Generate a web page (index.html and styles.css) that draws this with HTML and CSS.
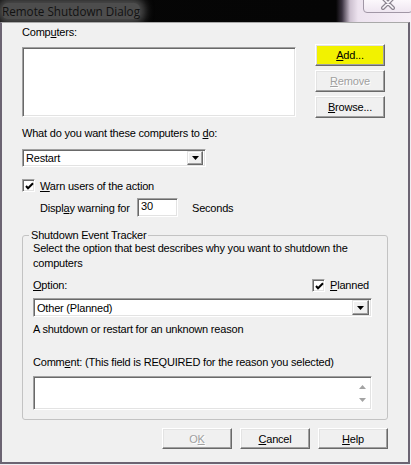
FILE: index.html
```html
<!DOCTYPE html>
<html>
<head>
    <meta charset="UTF-8">
    <title>Remote Shutdown Dialog</title>
    <link rel="stylesheet" href="styles.css">
</head>
<body>
    <div class="window">
        <div class="titlebar">
            <span class="title">Remote Shutdown Dialog</span>
            <div class="close-btn">
                <svg width="14" height="12" viewBox="0 0 14 12">
                    <path d="M2 -1 L12 9 M12 -1 L2 9" stroke="#8c8590" stroke-width="4" stroke-linecap="round"/>
                    <path d="M2 -1 L12 9 M12 -1 L2 9" stroke="#fbf8fc" stroke-width="1.6" stroke-linecap="round"/>
                </svg>
            </div>
        </div>
        <div class="dialog">
            <div class="computers">
                <div class="computers-left">
                    <div class="label">Comp<u>u</u>ters:</div>
                    <div class="listbox"></div>
                </div>
                <div class="side-buttons">
                    <button class="btn btn-add"><u>A</u>dd...</button>
                    <button class="btn" disabled><u>R</u>emove</button>
                    <button class="btn"><u>B</u>rowse...</button>
                </div>
            </div>

            <div class="label what">What do you want these computers to <u>d</u>o:</div>
            <div class="combo combo-action">
                <span class="combo-text">Restart</span>
                <span class="drop">
                    <svg width="7" height="4" viewBox="0 0 7 4"><path d="M0 0 H7 L3.5 4 Z" fill="#000"/></svg>
                </span>
            </div>

            <div class="check-row warn-check">
                <span class="checkbox">
                    <svg width="9" height="9" viewBox="0 0 9 9"><path d="M1 4 L3 6.2 L8 1.2" stroke="#000" stroke-width="2" fill="none"/></svg>
                </span>
                <span><u>W</u>arn users of the action</span>
            </div>

            <div class="warn-row">
                <span class="warn-label">Displ<u>a</u>y warning for</span>
                <div class="edit">30</div>
                <span class="seconds">Seconds</span>
            </div>

            <fieldset class="tracker">
                <legend>Shutdown Event Tracker</legend>
                <p class="hint">Select the option that best describes why you want to shutdown the computers</p>
                <div class="option-row">
                    <span><u>O</u>ption:</span>
                    <div class="check-row planned">
                        <span class="checkbox">
                            <svg width="9" height="9" viewBox="0 0 9 9"><path d="M1 4 L3 6.2 L8 1.2" stroke="#000" stroke-width="2" fill="none"/></svg>
                        </span>
                        <span><u>P</u>lanned</span>
                    </div>
                </div>
                <div class="combo combo-option">
                    <span class="combo-text">Other (Planned)</span>
                    <span class="drop">
                        <svg width="7" height="4" viewBox="0 0 7 4"><path d="M0 0 H7 L3.5 4 Z" fill="#000"/></svg>
                    </span>
                </div>
                <div class="label reason">A shutdown or restart for an unknown reason</div>
                <div class="label comment-label">Comm<u>e</u>nt: (This field is REQUIRED for the reason you selected)</div>
                <div class="memo">
                    <div class="memo-scroll">
                        <svg width="7" height="4" viewBox="0 0 7 4"><path d="M0 4 H7 L3.5 0 Z" fill="#a3a3a3"/></svg>
                        <svg width="7" height="4" viewBox="0 0 7 4"><path d="M0 0 H7 L3.5 4 Z" fill="#a3a3a3"/></svg>
                    </div>
                </div>
            </fieldset>

            <div class="footer">
                <button class="btn" disabled>O<u>K</u></button>
                <button class="btn"><u>C</u>ancel</button>
                <button class="btn"><u>H</u>elp</button>
            </div>
        </div>
    </div>
</body>
</html>
```

FILE: styles.css
```css
* {
    box-sizing: border-box;
}

body {
    margin: 0;
    background-color: #f1eef2;
    font-family: "Liberation Sans", Arial, sans-serif;
    font-size: 11px;
    letter-spacing: -0.2px;
    color: #000;
}

.window {
    width: 411px;
    height: 465px;
    display: flex;
    flex-direction: column;
}

/* glass title bar */
.titlebar {
    position: relative;
    height: 22px;
    flex: none;
    display: flex;
    align-items: center;
    padding-left: 2px;
    background: linear-gradient(90deg, #060606 0, #050505 336px, #3b3340 342px, #cbbfce 350px, #ede3ef 358px, #f6eff7 100%);
    overflow: hidden;
}

.title {
    font-family: "Open Sans", sans-serif;
    font-size: 11.7px;
    letter-spacing: 0;
    line-height: 16px;
    color: #121212;
    background-color: #4d4d4d;
    box-shadow: 0 0 8px 5px #4d4d4d;
    border-radius: 6px;
}

.close-btn {
    position: absolute;
    top: -2px;
    left: 363px;
    width: 50px;
    height: 15px;
    border: 1px solid #a197a6;
    border-radius: 0 0 4px 4px;
    background: linear-gradient(#fdfafd, #efe6f1);
}

.close-btn svg {
    display: block;
    margin: 0 0 0 17px;
}

/* dialog body */
.dialog {
    width: 410px;
    height: 442px;
    flex: none;
    background-color: #f0f0f0;
    border: 2px solid #6b6472;
    border-top: 1px solid #a9a9a9;
    padding: 3px 20px 0 20px;
}

.label {
    line-height: 13px;
    white-space: nowrap;
}

.computers {
    display: flex;
    gap: 19px;
}

.computers-left {
    width: 274px;
}

.listbox,
.edit,
.combo,
.memo,
.checkbox {
    background-color: #fff;
    border: 1px solid;
    border-color: #a0a0a0 #fff #fff #a0a0a0;
    box-shadow: inset 1px 1px 0 #696969, inset -1px -1px 0 #e3e3e3;
}

.listbox {
    margin-top: 8px;
    height: 70px;
}

.side-buttons {
    padding-top: 18px;
    display: flex;
    flex-direction: column;
    gap: 4px;
}

.btn {
    display: block;
    width: 70px;
    height: 22px;
    padding: 0;
    font: inherit;
    letter-spacing: inherit;
    color: #000;
    background-color: #f0f0f0;
    border: 1px solid;
    border-color: #fff #696969 #696969 #fff;
    box-shadow: inset -1px -1px 0 #a0a0a0, inset 1px 1px 0 #e3e3e3;
}

.btn:disabled {
    color: #a0a0a0;
    text-shadow: 1px 1px 0 #fff;
}

.btn-add {
    background-color: #f2f200;
}

.what {
    margin-top: 9px;
}

.combo {
    display: flex;
    align-items: center;
    padding: 0 2px 0 3px;
}

.combo-action {
    margin-top: 9px;
    width: 184px;
    height: 18px;
}

.combo-text {
    flex: 1;
}

.drop {
    width: 16px;
    height: 14px;
    display: flex;
    align-items: center;
    justify-content: center;
    background-color: #f0f0f0;
    border: 1px solid;
    border-color: #e3e3e3 #696969 #696969 #e3e3e3;
    box-shadow: inset -1px -1px 0 #a0a0a0, inset 1px 1px 0 #fff;
}

.drop svg {
    display: block;
}

.check-row {
    display: flex;
    align-items: center;
    gap: 5px;
    height: 13px;
    white-space: nowrap;
}

.checkbox {
    width: 13px;
    height: 13px;
    flex: none;
    padding: 2px;
}

.checkbox svg {
    display: block;
}

.warn-check {
    margin-top: 12px;
}

.warn-row {
    margin-top: 6px;
    margin-left: 18px;
    display: flex;
    align-items: center;
}

.warn-label {
    width: 97px;
}

.edit {
    width: 41px;
    height: 19px;
    line-height: 15px;
    padding-left: 3px;
}

.seconds {
    margin-left: 14px;
}

/* Shutdown Event Tracker group */
.tracker {
    margin: 12px 0 0 0;
    padding: 0 15px 9px 10px;
    width: 366px;
    border: 1px solid #c3c3c3;
    border-radius: 3px;
}

.tracker legend {
    padding: 0 2px;
    margin-left: -4px;
    line-height: 13px;
}

.hint {
    margin: -1px 0 0 0;
    line-height: 15px;
}

.option-row {
    margin-top: 8px;
    display: flex;
    justify-content: space-between;
    align-items: center;
    height: 13px;
    line-height: 13px;
}

.planned {
    margin-right: 3px;
}

.combo-option {
    margin-top: 6px;
    height: 19px;
}

.combo-option .drop {
    width: 17px;
    height: 15px;
}

.reason {
    margin-top: 6px;
}

.comment-label {
    margin-top: 20px;
}

.memo {
    margin-top: 7px;
    height: 34px;
    display: flex;
    justify-content: flex-end;
}

.memo-scroll {
    width: 17px;
    padding: 8px 0 7px;
    display: flex;
    flex-direction: column;
    justify-content: space-between;
    align-items: center;
}

.memo-scroll svg {
    display: block;
}

.footer {
    margin-top: 8px;
    display: flex;
    justify-content: flex-end;
    gap: 8px;
}

.footer .btn {
    height: 21px;
}
```
